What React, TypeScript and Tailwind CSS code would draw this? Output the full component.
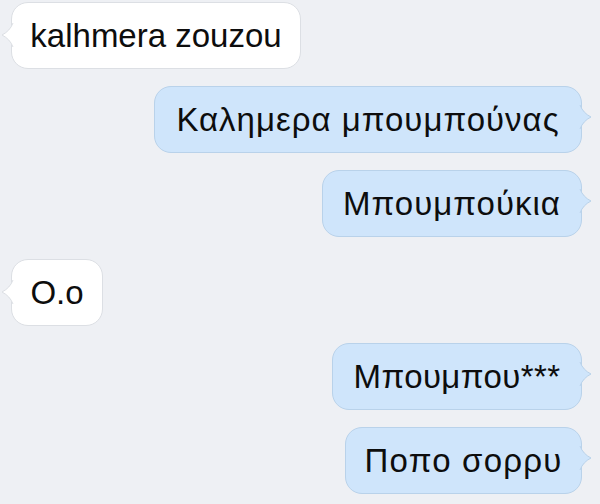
import React from "react";

type Msg = { text: string; me: boolean; w: string; mt: string; track: string };

const msgs: Msg[] = [
  { text: "kalhmera zouzou", me: false, w: "w-[290px]", mt: "mt-[2px]", track: "" },
  { text: "Καλημερα μπουμπούνας", me: true, w: "w-[428px]", mt: "mt-[17px]", track: "tracking-[1px]" },
  { text: "Μπουμπούκια", me: true, w: "w-[260px]", mt: "mt-[17px]", track: "tracking-[1px]" },
  { text: "O.o", me: false, w: "w-[92px]", mt: "mt-[22px]", track: "" },
  { text: "Μπουμπου***", me: true, w: "w-[250px]", mt: "mt-[17px]", track: "tracking-[0.4px]" },
  { text: "Ποπο σορρυ", me: true, w: "w-[237px]", mt: "mt-[17px]", track: "tracking-[1.2px]" },
];

function Tail({ me }: { me: boolean }) {
  const fill = me ? "#cfe5fb" : "#ffffff";
  const stroke = me ? "#b9d2ea" : "#dcdfe4";
  return (
    <svg
      width="13"
      height="24"
      viewBox="0 0 13 24"
      className={
        me
          ? "absolute top-[18px] right-[-11px]"
          : "absolute top-[20px] left-[-11px]"
      }
      style={me ? { transform: "scaleX(-1)" } : undefined}
    >
      <path d="M12,0 Q9,8 1,12 Q9,16 12,24 L13,24 L13,0 Z" fill={fill} />
      <path d="M12,0 Q9,8 1,12 Q9,16 12,24" fill="none" stroke={stroke} strokeWidth="1" />
    </svg>
  );
}

export default function App() {
  return (
    <div
      className="w-[600px] h-[504px] bg-[#eef0f4] flex flex-col overflow-hidden"
      style={{ fontFamily: '"Liberation Sans", Arial, sans-serif' }}
    >
      {msgs.map((m, i) => (
        <div
          key={i}
          className={`flex ${m.me ? "justify-end pr-[18px]" : "justify-start pl-[11px]"} ${m.mt}`}
        >
          <div
            className={`relative ${m.w} h-[67px] rounded-[17px] border flex items-center justify-center ${
              m.me ? "bg-[#cfe5fb] border-[#b9d2ea]" : "bg-white border-[#dcdfe4]"
            }`}
          >
            <Tail me={m.me} />
            <span
              className={`text-[33px] leading-[38px] text-[#0d0d0d] whitespace-nowrap pt-[1px] ${m.track}`}
            >
              {m.text}
            </span>
          </div>
        </div>
      ))}
    </div>
  );
}
